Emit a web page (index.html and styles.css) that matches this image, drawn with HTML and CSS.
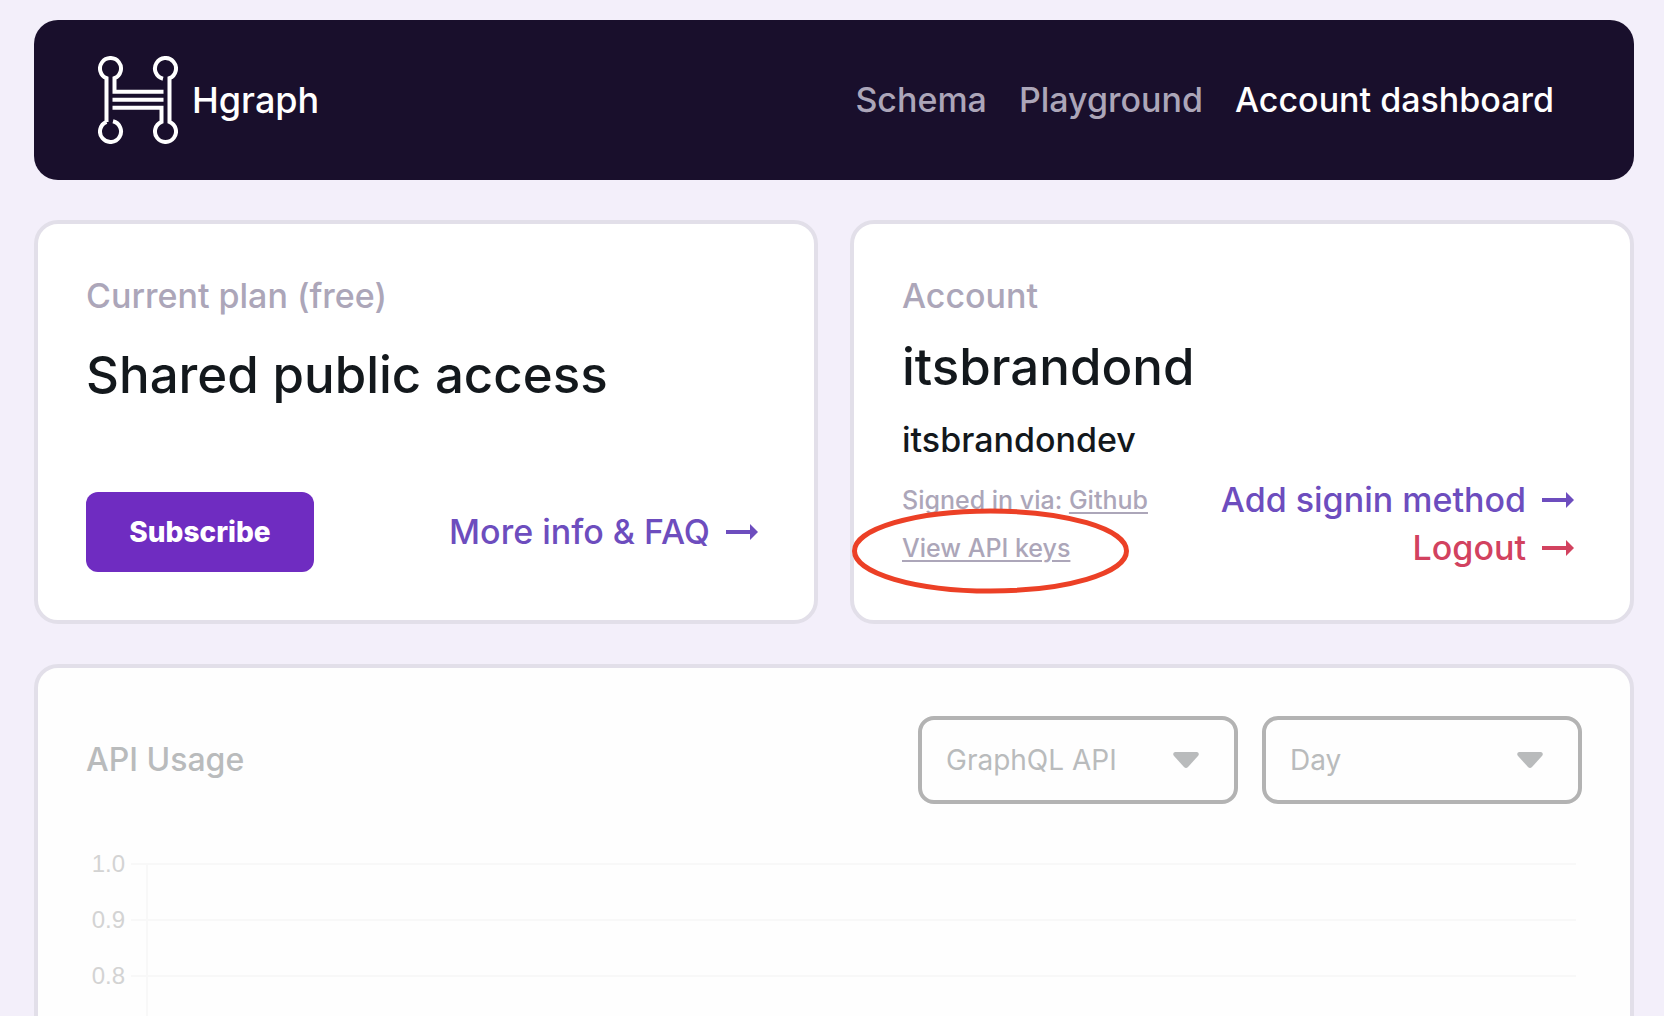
FILE: index.html
```html
<!DOCTYPE html>
<html lang="en">
<head>
<meta charset="utf-8">
<meta name="viewport" content="width=device-width, initial-scale=1">
<title>Hgraph</title>
<link rel="stylesheet" href="styles.css">
</head>
<body>
<header class="topbar">
  <a class="brand" href="#">
    <svg class="brand-mark" viewBox="0 0 80 88" fill="none" stroke="#fff" stroke-width="4" aria-hidden="true">
      <path d="M8.500 66V22.200A10.500 10.500 0 1 1 16.500 22.200V35.700H65.500M8.500 65.800A10.500 10.500 0 1 0 15 65.300M14.500 43.700H65.500M14.500 51.700H63.500V65.800A10.500 10.500 0 1 0 71.500 65.800V22.200A10.500 10.500 0 1 0 65 22.700"/>
    </svg>
    <span>Hgraph</span>
  </a>
  <nav class="nav">
    <a href="#">Schema</a>
    <a href="#">Playground</a>
    <a class="current" href="#" aria-current="page">Account dashboard</a>
  </nav>
</header>
<main class="content">
  <section class="card plan">
    <div>
      <p class="label">Current plan (free)</p>
      <h1 class="title plan-title">Shared public access</h1>
    </div>
    <div class="plan-actions">
      <button class="subscribe" type="button">Subscribe</button>
      <a class="action" href="#">More info &amp; FAQ
        <svg class="arrow" viewBox="0 0 32 16" aria-hidden="true"><path d="M0 6h24V0l8 8-8 8v-6H0z"/></svg></a>
    </div>
  </section>
  <section class="card account">
    <p class="label">Account</p>
    <h2 class="title">itsbrandond</h2>
    <p class="handle">itsbrandondev</p>
    <div class="account-rows">
      <div class="account-row">
        <p class="small">Signed in via: <a href="#">Github</a></p>
        <a class="action" href="#">Add signin method
          <svg class="arrow" viewBox="0 0 32 16" aria-hidden="true"><path d="M0 6h24V0l8 8-8 8v-6H0z"/></svg></a>
      </div>
      <div class="account-row">
        <p class="small keys"><a href="#">View API keys</a>
          <svg class="ring" viewBox="0 0 277 86" aria-hidden="true"><ellipse cx="138.500" cy="43" rx="136" ry="40"/></svg></p>
        <a class="action danger" href="#">Logout
          <svg class="arrow" viewBox="0 0 32 16" aria-hidden="true"><path d="M0 6h24V0l8 8-8 8v-6H0z"/></svg></a>
      </div>
    </div>
  </section>
  <section class="card usage">
    <div class="usage-head">
      <h2 class="usage-title">API Usage</h2>
      <div class="filters">
        <div class="picker">
          <select aria-label="API"><option>GraphQL API</option></select>
          <svg class="caret" viewBox="0 0 26 16" aria-hidden="true"><path d="M2 0H24Q27 1 25 4L15 15Q13 17 11 15L1 4Q-1 1 2 0Z"/></svg>
        </div>
        <div class="picker">
          <select aria-label="Period"><option>Day</option></select>
          <svg class="caret" viewBox="0 0 26 16" aria-hidden="true"><path d="M2 0H24Q27 1 25 4L15 15Q13 17 11 15L1 4Q-1 1 2 0Z"/></svg>
        </div>
      </div>
    </div>
    <div class="chart">
      <div class="chart-row"><span>1.0</span><i class="tick"></i><i class="cell"></i></div>
      <div class="chart-row"><span>0.9</span><i class="tick"></i><i class="cell"></i></div>
      <div class="chart-row"><span>0.8</span><i class="tick"></i><i class="cell"></i></div>
    </div>
  </section>
</main>
</body>
</html>
```
FILE: styles.css
```css
* { box-sizing: border-box; }

body {
  margin: 0;
  padding: 20px 30px 20px 34px;
  background: #f3effa;
  color: #13181c;
  font: 500 34px/48px Inter, "Open Sans", sans-serif;
}

h1, h2, p { margin: 0; font-weight: 500; }
a { color: inherit; text-decoration: none; }

.topbar {
  display: flex;
  align-items: center;
  justify-content: space-between;
  min-height: 160px;
  padding: 0 80px 0 64px;
  border-radius: 24px;
  background: #190f2c;
  color: #fff;
}

.brand { display: flex; align-items: center; gap: 14px; font-size: 36px; }
.brand-mark { width: 80px; height: 88px; }

.nav { display: flex; gap: 32px; color: #aca6b9; }
.nav .current { color: #fff; }

.content {
  display: grid;
  grid-template-columns: 1fr 1fr;
  gap: 40px 32px;
  margin-top: 40px;
}

.card {
  padding: 48px;
  border: 4px solid #e2dfe9;
  border-radius: 24px;
  background: #fff;
}

.label { color: #aca6b9; line-height: 48px; }
.title { font-size: 51px; line-height: 62px; margin-top: 16px; }
.plan-title { margin-top: 24px; }

.plan {
  display: flex;
  flex-direction: column;
  justify-content: space-between;
  min-height: 404px;
}

.plan-actions { display: flex; align-items: center; justify-content: space-between; padding-right: 8px; }

.subscribe {
  width: 228px;
  height: 80px;
  border: 0;
  border-radius: 12px;
  background: #6f2cc1;
  color: #fff;
  font: 800 28px/40px Inter, "Open Sans", sans-serif;
}

.action { display: flex; align-items: center; gap: 16px; color: #6d4dbe; }
.danger { color: #d2425f; }
.arrow { width: 32px; height: 16px; fill: currentColor; }

.handle { margin-top: 22px; line-height: 40px; }
.account-rows { margin-top: 16px; }
.account-row { display: flex; align-items: center; justify-content: space-between; padding-right: 8px; }
.small { color: #aca6b9; font-size: 25px; }
.small a { text-decoration: underline; text-decoration-thickness: 2px; text-underline-offset: 3px; }

.keys { position: relative; }
.ring {
  position: absolute;
  left: -50px;
  top: -16px;
  width: 277px;
  height: 86px;
  fill: none;
  stroke: #ec4026;
  stroke-width: 5px;
  pointer-events: none;
}

.usage { grid-column: 1 / -1; background: #fefefe; }
.usage-head { display: flex; align-items: center; justify-content: space-between; }
.usage-title { color: #b9bbbc; font-size: 32px; }
.filters { display: flex; gap: 24px; }
.picker { position: relative; }
.picker select {
  display: block;
  width: 320px;
  height: 88px;
  padding: 0 60px 0 24px;
  border: 4px solid #b3b3b3;
  border-radius: 16px;
  appearance: none;
  background: #fefefe;
  color: #b9bbbc;
  font: 400 28px/40px Inter, "Open Sans", sans-serif;
}
.caret { position: absolute; right: 39px; top: 36px; width: 26px; height: 16px; fill: #b9bbbc; pointer-events: none; }

.chart { margin-top: 59px; padding-right: 6px; }
.chart-row { display: flex; height: 56px; }
.chart-row span {
  width: 39px;
  margin-top: -13px;
  color: #d3d3d3;
  font: 400 24px/28px "Liberation Sans", Arial, sans-serif;
  text-align: right;
}
.tick { width: 15px; margin-left: 6px; border-top: 2px solid #f8f8f8; }
.cell { flex: 1; border-top: 2px solid #f8f8f8; border-left: 2px solid #f8f8f8; }
```
